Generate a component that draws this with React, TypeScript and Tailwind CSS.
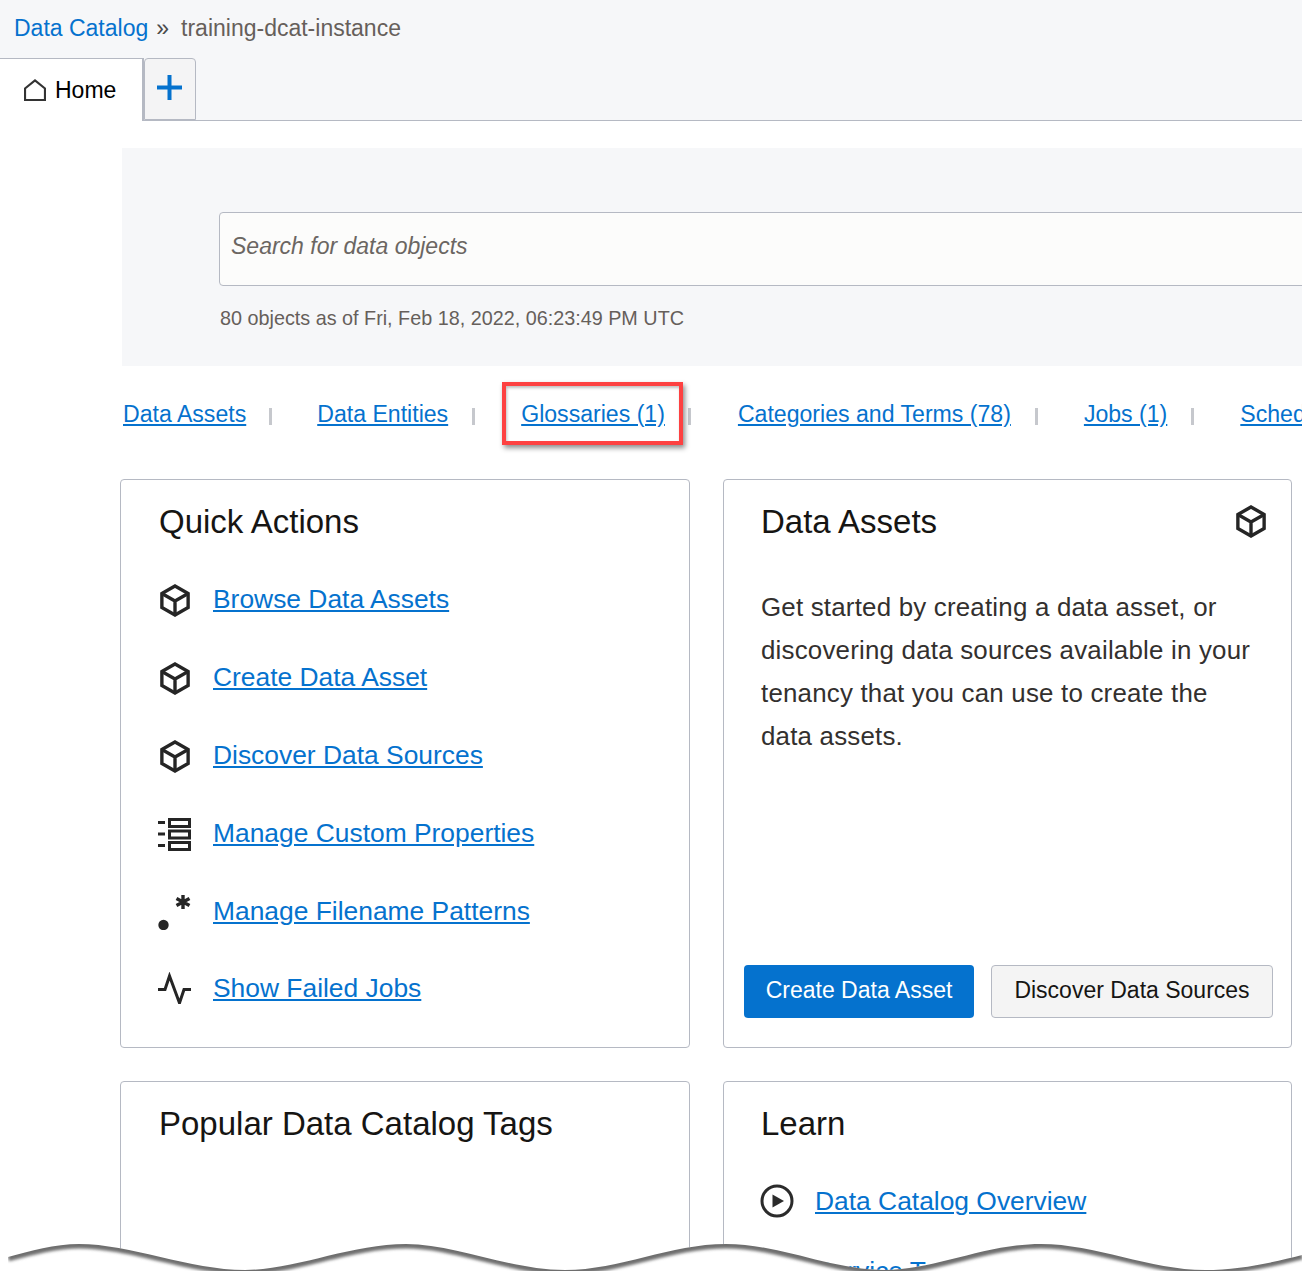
import type { ReactNode } from "react";

const FONT = "font-['Liberation_Sans',Arial,sans-serif]";

function BoxIcon({ className }: { className?: string }) {
  return (
    <svg viewBox="0 0 32 35" fill="none" stroke="#252525" strokeWidth="3.6" strokeLinejoin="miter" className={className}>
      <path d="M16 2 L30 10 V25 L16 33 L2 25 V10 Z" />
      <path d="M2 10 L16 18 L30 10 M16 18 V33" />
    </svg>
  );
}

function ListIcon() {
  return (
    <svg viewBox="0 0 33 33" fill="none" stroke="#252525" strokeWidth="3" className="-ml-[1px] mt-[2px] h-[33px] w-[33px]">
      <path d="M11.5 1.5 H31.5 V8.5 H11.5 Z M11.5 13 H31.5 V20 H11.5 Z M11.5 24.5 H31.5 V31.5 H11.5 Z" />
      <path d="M0 4.5 H7 M0 16 H7 M0 27.5 H7" />
    </svg>
  );
}

function PatternIcon() {
  return (
    <svg viewBox="0 0 33 36" className="-ml-[1px] mt-[1px] h-[36px] w-[33px]">
      <circle cx="5.5" cy="31" r="5.2" fill="#252525" />
      <path d="M25 1 V15 M18.5 4.5 L31.5 11.5 M31.5 4.5 L18.5 11.5" stroke="#252525" strokeWidth="3.4" />
    </svg>
  );
}

function ActivityIcon() {
  return (
    <svg viewBox="0 0 33 32" fill="none" stroke="#252525" strokeWidth="3" className="-ml-[1px] h-[32px] w-[33px]">
      <path d="M0 17.5 H7 L11.5 4 L21.5 31 L26 17.5 H33" />
    </svg>
  );
}

function PlayIcon() {
  return (
    <svg viewBox="0 0 34 34" className="-ml-[1px] h-[34px] w-[34px]">
      <circle cx="17" cy="17" r="15" fill="none" stroke="#2b2b2b" strokeWidth="3" />
      <path d="M12.5 10.5 L24 17 L12.5 23.5 Z" fill="#2b2b2b" />
    </svg>
  );
}

function ActionRow({ icon, label, rowClass }: { icon: ReactNode; label: string; rowClass: string }) {
  return (
    <div className={`flex items-center ${rowClass}`}>
      <div className="flex w-[54px] shrink-0 items-center">{icon}</div>
      <a className="text-[26.4px] leading-[32px] text-[#0572ce] underline">{label}</a>
    </div>
  );
}

function Sep({ className }: { className: string }) {
  return <span className={`h-[17px] w-[3px] shrink-0 bg-[#c6c8cd] ${className}`} />;
}

function TornEdge() {
  const wave =
    "M8 1257 C30 1251 55 1244 79 1244 C130 1244 190 1270 245 1270 C295 1270 350 1244 406 1244 C455 1244 510 1270 565 1270 C620 1270 670 1244 726 1244 C780 1244 830 1270 885 1270 C935 1270 985 1244 1041 1244 C1095 1244 1150 1270 1205 1270 C1240 1270 1275 1262 1302 1255";
  return (
    <svg viewBox="0 1230 1302 41" className="absolute bottom-0 left-0 h-[41px] w-[1302px]">
      <defs>
        <filter id="tornBlur" x="-2%" y="-60%" width="104%" height="220%">
          <feGaussianBlur stdDeviation="1.6" />
        </filter>
        <clipPath id="tornClip">
          <path d={`${wave} V1271 H8 Z`} />
        </clipPath>
      </defs>
      <path d={`${wave} V1271 H8 Z`} fill="#ffffff" />
      <g clipPath="url(#tornClip)">
        <path d={wave} fill="none" stroke="#6e6e6e" strokeWidth="9" filter="url(#tornBlur)" />
      </g>
    </svg>
  );
}

export default function App() {
  return (
    <div className={`relative h-[1271px] w-[1302px] overflow-hidden bg-white ${FONT}`}>
      {/* Breadcrumb and tabs */}
      <div className="h-[121px] border-b border-[#b5b9c3] bg-[#f6f7f9]">
        <div className="flex h-[58px] items-center pb-[1px] pl-[14px] text-[23px]">
          <a className="text-[#0572ce]">Data Catalog</a>
          <span className="ml-[8px] text-[#4a4a4a]">»</span>
          <span className="ml-[12px] text-[#665f5b]">training-dcat-instance</span>
        </div>
        <div className="flex h-[63px] items-stretch">
          <div className="flex h-[63px] w-[144px] items-center gap-[9px] border-t border-r-2 border-[#b5b9c3] bg-white pl-[24px] text-[23px] text-black">
            <svg viewBox="0 0 22 22" fill="none" stroke="#333333" strokeWidth="2.2" className="h-[22px] w-[22px]">
              <path d="M1 9.5 L11 1.5 L21 9.5 V21 H1 Z" />
            </svg>
            <span>Home</span>
          </div>
          <div className="flex h-[62px] w-[52px] items-center justify-center rounded-t-[4px] border border-[#b5b9c3] bg-[#f4f4f5] pr-[2px] pb-[4px]">
            <svg viewBox="0 0 25 25" fill="none" stroke="#0572ce" strokeWidth="4" className="h-[25px] w-[25px]">
              <path d="M12.5 0 V25 M0 12.5 H25" />
            </svg>
          </div>
        </div>
      </div>

      {/* Search panel */}
      <div className="mt-[27px] ml-[122px] h-[218px] bg-[#f6f7f9] pt-[64px] pl-[97px]">
        <div className="flex h-[74px] w-[1200px] items-center rounded-[4px] border border-[#b5b9c3] bg-[#fcfcfb] pb-[6px] pl-[11px] text-[23px] text-[#6b6662] italic">
          Search for data objects
        </div>
        <p className="mt-[19px] pl-[1px] text-[19.8px] leading-[26px] text-[#665f5b]">80 objects as of Fri, Feb 18, 2022, 06:23:49 PM UTC</p>
      </div>

      {/* Section links */}
      <div className="mt-[33px] flex h-[30px] items-center whitespace-nowrap pl-[123px] text-[23.1px] text-[#0572ce]">
        <a className="underline">Data Assets</a>
        <Sep className="mt-[4px] ml-[23px]" />
        <a className="ml-[45px] underline">Data Entities</a>
        <Sep className="mt-[4px] ml-[24px]" />
        <div className="relative ml-[46px]">
          <a className="underline">Glossaries (1)</a>
          <div className="absolute -top-[15px] -right-[18px] -bottom-[14px] -left-[19px] border-4 border-[#fd4141] shadow-[2px_3px_5px_rgba(0,0,0,0.45),inset_1px_2px_3px_rgba(0,0,0,0.25)]" />
        </div>
        <Sep className="mt-[4px] ml-[23px]" />
        <a className="ml-[47px] underline">Categories and Terms (78)</a>
        <Sep className="mt-[4px] ml-[24px]" />
        <a className="ml-[46px] underline">Jobs (1)</a>
        <Sep className="mt-[4px] ml-[24px]" />
        <a className="ml-[46px] underline">Schedules</a>
      </div>

      {/* Cards */}
      <div className="mt-[50px] ml-[120px] grid grid-cols-[570px_569px] gap-x-[33px] gap-y-[33px]">
        <section className="h-[569px] rounded-[4px] border border-[#b5b9c3] bg-white pt-[22px] pl-[38px]">
          <h2 className="text-[33px] leading-[40px] text-[#161513]">Quick Actions</h2>
          <div className="mt-[18px] flex flex-col">
            <ActionRow rowClass="h-[78px]" icon={<BoxIcon className="mt-[2px] ml-[1px] h-[33px] w-[30px]" />} label="Browse Data Assets" />
            <ActionRow rowClass="h-[78px]" icon={<BoxIcon className="mt-[2px] ml-[1px] h-[33px] w-[30px]" />} label="Create Data Asset" />
            <ActionRow rowClass="h-[78px]" icon={<BoxIcon className="mt-[2px] ml-[1px] h-[33px] w-[30px]" />} label="Discover Data Sources" />
            <ActionRow rowClass="h-[78px]" icon={<ListIcon />} label="Manage Custom Properties" />
            <ActionRow rowClass="h-[78px]" icon={<PatternIcon />} label="Manage Filename Patterns" />
            <ActionRow rowClass="-mt-[1px] h-[78px]" icon={<ActivityIcon />} label="Show Failed Jobs" />
          </div>
        </section>

        <section className="flex h-[569px] flex-col rounded-[4px] border border-[#b5b9c3] bg-white pt-[22px] pr-[18px] pl-[37px]">
          <div className="flex items-center justify-between pr-[7px]">
            <h2 className="text-[33px] leading-[40px] text-[#161513]">Data Assets</h2>
            <BoxIcon className="-mt-[1px] h-[33px] w-[30px]" />
          </div>
          <p className="mt-[44px] w-[498px] text-[25.9px] leading-[43px] tracking-[0.2px] text-[#33302e]">
            Get started by creating a data asset, or discovering data sources available in your tenancy that you can use to create the data assets.
          </p>
          <div className="mt-auto mb-[29px] -ml-[17px] flex gap-[17px]">
            <button className="flex h-[53px] w-[230px] items-center justify-center rounded-[4px] bg-[#0572ce] pb-[2px] text-[23px] text-white">
              Create Data Asset
            </button>
            <button className="flex h-[53px] w-[282px] items-center justify-center rounded-[4px] border border-[#b5b9c3] bg-[#f4f4f4] pb-[2px] text-[23px] text-[#161513]">
              Discover Data Sources
            </button>
          </div>
        </section>

        <section className="h-[300px] rounded-[4px] border border-[#b5b9c3] bg-white pt-[22px] pl-[38px]">
          <h2 className="text-[33px] leading-[40px] text-[#161513]">Popular Data Catalog Tags</h2>
        </section>

        <section className="h-[300px] rounded-[4px] border border-[#b5b9c3] bg-white pt-[22px] pl-[37px]">
          <h2 className="text-[33px] leading-[40px] text-[#161513]">Learn</h2>
          <div className="mt-[18px] flex flex-col">
            <ActionRow rowClass="h-[78px]" icon={<PlayIcon />} label="Data Catalog Overview" />
            <ActionRow rowClass="-mt-[8px] h-[78px]" icon={<PlayIcon />} label="Service Tour" />
          </div>
        </section>
      </div>

      <TornEdge />
    </div>
  );
}
